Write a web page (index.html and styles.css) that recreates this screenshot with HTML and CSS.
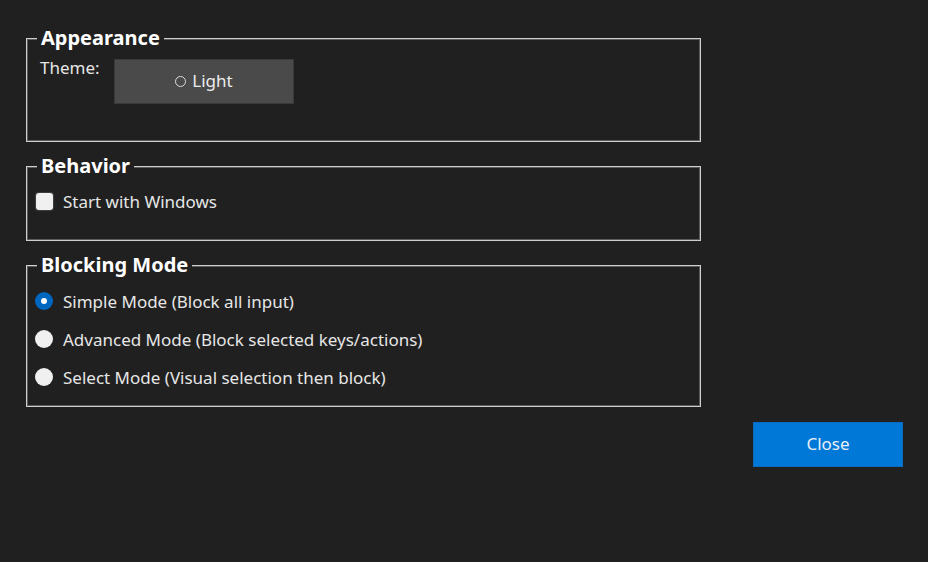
FILE: index.html
```html
<!DOCTYPE html>
<html>
<head>
<meta charset="utf-8">
<link rel="stylesheet" href="styles.css">
</head>
<body>
<div class="page">
  <div class="group g-appearance">
    <span class="legend">Appearance</span>
    <div class="row-theme">
      <span class="label">Theme:</span>
      <button class="theme-btn"><span class="ring"></span>Light</button>
    </div>
  </div>
  <div class="group g-behavior">
    <span class="legend">Behavior</span>
    <div class="option"><span class="check"></span><span class="label">Start with Windows</span></div>
  </div>
  <div class="group g-blocking">
    <span class="legend">Blocking Mode</span>
    <div class="options">
      <div class="option"><span class="radio on"></span><span class="label">Simple Mode (Block all input)</span></div>
      <div class="option"><span class="radio"></span><span class="label">Advanced Mode (Block selected keys/actions)</span></div>
      <div class="option"><span class="radio"></span><span class="label">Select Mode (Visual selection then block)</span></div>
    </div>
  </div>
  <button class="close-btn">Close</button>
</div>
</body>
</html>
```
FILE: styles.css
```css
html, body {
  margin: 0;
  padding: 0;
  background: #202020;
}
body {
  width: 928px;
  height: 562px;
  overflow: hidden;
  font-family: "Noto Sans", "Open Sans", sans-serif;
  font-size: 17px;
  color: #e6e6e6;
}
.page {
  display: flex;
  flex-direction: column;
  align-items: flex-start;
  padding: 38px 0 0 26px;
}
.group {
  position: relative;
  box-sizing: border-box;
  width: 675px;
  border: 1px solid #cfcfcf;
  box-shadow: 0 0 0 1px rgba(140,140,140,0.55) inset;
  margin-bottom: 24px;
}
.legend {
  position: absolute;
  left: 10px;
  top: -13px;
  padding: 0 4px;
  background: #202020;
  color: #ffffff;
  font-weight: 700;
  font-size: 20px;
  line-height: 24px;
}
.g-appearance { height: 104px; padding: 20px 0 0 13px; }
.g-behavior { height: 75px; padding: 25px 0 0 9px; }
.g-blocking { height: 142px; padding: 26px 0 0 8px; margin-bottom: 15px; }

.row-theme {
  display: flex;
  align-items: flex-start;
}
.row-theme .label {
  width: 74px;
  line-height: 18px;
}
.theme-btn {
  box-sizing: border-box;
  width: 180px;
  height: 45px;
  border: 1px solid #3a3a3a;
  background-color: #4b4b4b;
  background-image: repeating-conic-gradient(#4d4d4d 0 25%, #474747 0 50%);
  background-size: 2px 2px;
  color: #ececec;
  font-family: inherit;
  font-size: 17px;
  display: flex;
  align-items: center;
  justify-content: center;
  gap: 6px;
  padding: 0 0 2px 0;
}
.ring {
  width: 11px;
  height: 11px;
  border: 1.6px solid #dcdcdc;
  border-radius: 50%;
  box-sizing: border-box;
  margin-top: 2px;
}
.options {
  display: flex;
  flex-direction: column;
  gap: 20px;
}
.option {
  display: flex;
  align-items: center;
  gap: 10px;
  height: 18px;
}
.check {
  width: 17px;
  height: 17px;
  border-radius: 3px;
  background: #f0f0f0;
  box-shadow: 0 0 1px 1px rgba(255,255,255,0.15);
}
.radio {
  width: 18px;
  height: 18px;
  border-radius: 50%;
  background: #f0f0f0;
  box-sizing: border-box;
  display: flex;
  align-items: center;
  justify-content: center;
}
.radio.on {
  background: #0067c0;
}
.radio.on::after {
  content: "";
  width: 6px;
  height: 6px;
  border-radius: 50%;
  background: #ffffff;
}
.close-btn {
  align-self: flex-end;
  margin-right: 25px;
  width: 150px;
  height: 45px;
  border: 1px solid #0a6cc0;
  background: #0078d7;
  color: #e8eef6;
  font-family: inherit;
  font-size: 17px;
  padding: 0 0 2px 0;
}
```
